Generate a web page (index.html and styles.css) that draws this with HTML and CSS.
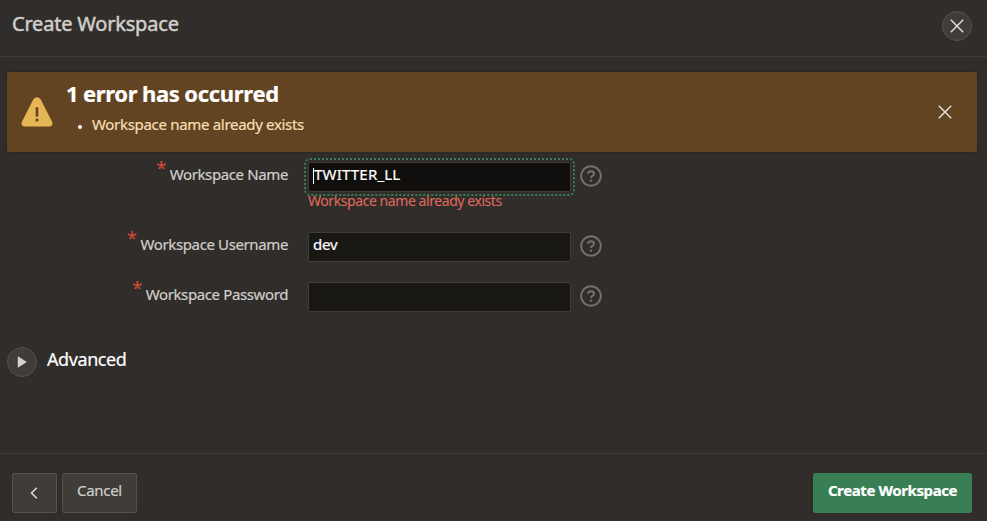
FILE: index.html
```html
<!DOCTYPE html>
<html lang="en">
<head>
<meta charset="utf-8">
<title>Create Workspace</title>
<link rel="stylesheet" href="styles.css">
</head>
<body>
<div class="dialog">
  <header class="header">
    <h1 class="title"><span>Create Workspace</span></h1>
    <button class="round" aria-label="Close"><svg width="14" height="14" viewBox="0 0 14 14"><path d="M.8.8 13.2 13.2M13.2.8.8 13.2"/></svg></button>
  </header>
  <main class="body">
    <section class="alert">
      <svg class="warning" width="32" height="30" viewBox="0 0 32 30"><path class="tri" d="M12.3 2.4Q16-1.7 19.7 2.4L31 24.6Q32.6 28.8 28.5 29.4H3.5Q-.6 28.8 1 24.6Z"/><path class="mark" d="M16 11.2v7.2"/><circle class="dot" cx="16" cy="23" r="1.6"/></svg>
      <div class="message">
        <h2 class="alert-title"><span>1 error has occurred</span></h2>
        <ul class="errors"><li><span>Workspace name already exists</span></li></ul>
      </div>
      <button class="dismiss" aria-label="Dismiss"><svg width="14" height="14" viewBox="0 0 14 14"><path d="M.8.8 13.2 13.2M13.2.8.8 13.2"/></svg></button>
    </section>
    <form class="form">
      <div class="field invalid">
        <div class="label"><span class="star">*</span><span class="label-text">Workspace Name</span></div>
        <div class="control"><div class="input focused"><i class="caret"></i><span class="value">TWITTER_LL</span></div><div class="hint"><span>Workspace name already exists</span></div></div>
        <svg class="help" width="22" height="22" viewBox="0 0 22 22"><circle cx="11" cy="11" r="9.8"/><path d="M8 8.8Q8.2 6.2 11 6.2T14 8.6Q14 10 12.5 10.8 11 11.6 11 13"/><circle class="point" cx="11" cy="15.6" r="1.2"/></svg>
      </div>
      <div class="field">
        <div class="label"><span class="star">*</span><span class="label-text">Workspace Username</span></div>
        <div class="control"><div class="input"><span class="value dev">dev</span></div></div>
        <svg class="help" width="22" height="22" viewBox="0 0 22 22"><circle cx="11" cy="11" r="9.8"/><path d="M8 8.8Q8.2 6.2 11 6.2T14 8.6Q14 10 12.5 10.8 11 11.6 11 13"/><circle class="point" cx="11" cy="15.6" r="1.2"/></svg>
      </div>
      <div class="field">
        <div class="label"><span class="star">*</span><span class="label-text">Workspace Password</span></div>
        <div class="control"><div class="input"></div></div>
        <svg class="help" width="22" height="22" viewBox="0 0 22 22"><circle cx="11" cy="11" r="9.8"/><path d="M8 8.8Q8.2 6.2 11 6.2T14 8.6Q14 10 12.5 10.8 11 11.6 11 13"/><circle class="point" cx="11" cy="15.6" r="1.2"/></svg>
      </div>
    </form>
    <div class="advanced">
      <button class="round" aria-label="Expand"><svg width="10" height="12" viewBox="0 0 10 12"><path class="play" d="M.8.2 9.8 6 .8 11.8Z"/></svg></button>
      <span class="advanced-text">Advanced</span>
    </div>
  </main>
  <footer class="footer">
    <button class="btn back" aria-label="Back"><svg width="8" height="12" viewBox="0 0 8 12"><path d="M6.8.8 1.5 6l5.3 5.2"/></svg></button>
    <button class="btn cancel"><span>Cancel</span></button>
    <button class="btn primary"><span>Create Workspace</span></button>
  </footer>
</div>
</body>
</html>
```
FILE: styles.css
```css
* { box-sizing: border-box; }
body { margin: 0; background: #312d2a; color: #d0cecb; font: 15px/20px "Noto Sans", sans-serif; -webkit-text-stroke: .2px currentColor; }
button { padding: 0; font: inherit; color: inherit; }
svg { display: block; fill: none; stroke: #e0deda; stroke-width: 1.5; }
h1, h2, ul { margin: 0; padding: 0; }
span { white-space: nowrap; }
.dialog { height: 521px; display: flex; flex-direction: column; overflow: hidden; }
.header { height: 57px; border-bottom: 1px solid #403c38; padding: 11px 15px 0 12px; display: flex; justify-content: space-between; align-items: flex-start; }
.title { font-size: 20px; line-height: 26px; font-weight: 400; letter-spacing: -.2px; -webkit-text-stroke-width: .5px; }
.round { width: 30px; height: 30px; flex: none; border-radius: 50%; background: #403c37; border: 1px solid #55514b; display: flex; align-items: center; justify-content: center; }
.body { flex: 1; padding: 15px 10px 0 7px; }
.alert { height: 80px; border-radius: 2px; background: #624422; display: flex; box-shadow: 0 0 2px #211e1b; }
.warning { margin: 25px 13px 0 14px; flex: none; }
.tri { fill: #e6b654; stroke: none; }
.mark { stroke: #624422; stroke-width: 2.6; stroke-linecap: round; }
.dot { fill: #624422; stroke: none; }
.message { flex: 1; padding-top: 7px; }
.alert-title { font-size: 22px; line-height: 28px; font-weight: 700; color: #fff; letter-spacing: -.3px; word-spacing: -.8px; }
.errors { list-style: none; margin-top: 7px; display: flex; }
.errors li { display: flex; align-items: center; color: #f7dfb4; letter-spacing: -.31px; }
.errors li::before { content: ""; width: 4px; height: 4px; border-radius: 50%; background: #fff; margin: 6px 10px 0 12px; }
.dismiss { width: 30px; height: 79px; margin-right: 17px; background: none; border: 0; display: flex; align-items: center; justify-content: center; }
.form { padding-top: 10px; }
.field { display: flex; height: 50px; align-items: flex-start; }
.field.invalid { height: 70px; }
.label { width: 281px; display: flex; justify-content: flex-end; padding-top: 2px; letter-spacing: -.38px; }
.star { color: #cf4a3a; font-size: 18px; margin: -6px 4px 0 0; }
.control { margin-left: 20px; width: 263px; }
.input { height: 30px; border: 1px solid #403c38; border-radius: 2px; background: #191714; color: #fff; padding: 1px 4px; display: flex; }
.input.focused { background: #100f0d; outline: 2px dotted #387f56; outline-offset: 2px; }
.value { letter-spacing: .2px; }
.dev { letter-spacing: -.2px; }
.caret { width: 1px; height: 16px; background: #fff; margin-top: 4px; }
.hint { color: #e26a5c; font-size: 14px; line-height: 17px; letter-spacing: -.43px; -webkit-text-stroke-width: 0; }
.help { margin: 3px 0 0 9px; stroke: #75716d; stroke-width: 1.9; }
.point { fill: #75716d; stroke: none; }
.advanced { display: flex; margin-top: 15px; }
.advanced-text { color: #fff; font-size: 18px; line-height: 25px; margin-left: 10px; letter-spacing: -.42px; }
.play { fill: #d4d2ce; stroke: none; }
.footer { height: 68px; border-top: 1px solid #403c38; padding: 19px 15px 0 12px; display: flex; gap: 5px; }
.btn { height: 40px; border: 1px solid #55514b; border-radius: 2px; background: #403c37; display: flex; align-items: center; justify-content: center; }
.btn span { margin-top: -6px; }
.back { width: 45px; }
.back svg { margin-right: 1px; }
.cancel { width: 75px; letter-spacing: -.3px; }
.primary { width: 159px; margin-left: auto; background: #387f56; border-color: #387f56; color: #fff; font-weight: 700; letter-spacing: -.4px; }
```
